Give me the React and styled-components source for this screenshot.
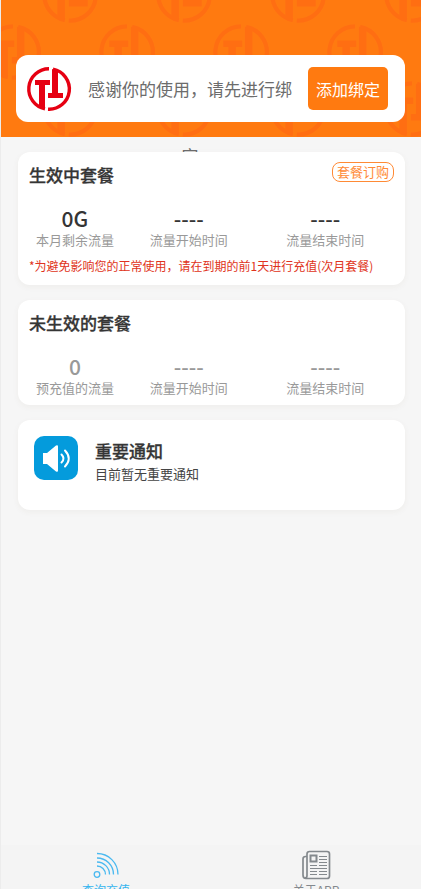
import React from 'react';
import styled, { createGlobalStyle } from 'styled-components';

const GlobalStyle = createGlobalStyle`
  * { box-sizing: border-box; }
  body {
    margin: 0;
    background: #f6f6f6;
    font-family: "Noto Sans CJK SC", sans-serif;
    color: #353535;
  }
  h2, p, dl, dt, dd { margin: 0; }
  button { font-family: inherit; cursor: pointer; }
`;

const Page = styled.div`
  display: flex;
  flex-direction: column;
  height: 100vh;
  overflow: hidden;
  border-left: 1px solid #ececec;
`;

const Header = styled.header`
  position: relative;
  padding: 55px 16px 15px 15px;
  background: #ff7a10;
`;

const Backdrop = styled.svg`
  position: absolute;
  inset: 0;
  width: 100%;
  height: 100%;
`;

const BindCard = styled.section`
  position: relative;
  display: flex;
  align-items: center;
  height: 67px;
  padding: 0 17px 0 10px;
  border-radius: 12px;
  background: #fff;
`;

const Logo = styled.svg`
  flex: none;
  width: 46px;
  height: 46px;
`;

const Greeting = styled.p`
  flex: 1;
  height: 67px;
  padding: 0 10px;
  font-size: 17px;
  line-height: 67px;
  text-align: center;
  color: #6c6c6c;
`;

const BindButton = styled.button`
  flex: none;
  height: 43px;
  padding: 0 8px;
  border: 0;
  border-radius: 5px;
  background: #ff7a10;
  color: #fff;
  font-size: 16px;
`;

const Content = styled.main`
  position: relative;
  flex: 1;
  display: flex;
  flex-direction: column;
  gap: 15px;
  padding: 15px 16px 15px 17px;
`;

const Card = styled.section`
  border-radius: 12px;
  background: #fff;
  box-shadow: 0 2px 6px rgba(90, 80, 40, 0.05);
`;

const CardHead = styled.div`
  display: flex;
  justify-content: space-between;
  align-items: flex-start;
  padding: 10px 11px 0;
`;

const Title = styled.h2`
  font-size: 17px;
  line-height: 26px;
  font-weight: 500;
  -webkit-text-stroke: 0.3px;
`;

const OrderButton = styled.button`
  height: 20px;
  padding: 0 4px;
  border: 1px solid #ff8a35;
  border-radius: 8px;
  background: #fff;
  color: #ff8a35;
  font-size: 13px;
  line-height: 18px;
`;

const Stats = styled.dl`
  display: grid;
  grid-template-columns: 5fr 5fr 7fr;
  padding: 17px 0 8px;
`;

const Stat = styled.div`
  display: flex;
  flex-direction: column-reverse;
  text-align: center;
`;

const StatLabel = styled.dt`
  font-size: 13px;
  line-height: 18px;
  color: #999;
`;

const StatValue = styled.dd`
  font-size: 21px;
  line-height: 26px;
  font-weight: 500;
  color: ${(p) => (p.$muted ? '#999' : '#353535')};
`;

const Warning = styled.p`
  padding: 0 11px 10px;
  font-size: 12px;
  line-height: 18px;
  white-space: nowrap;
  color: #e03320;
`;

const Notice = styled(Card)`
  display: flex;
  gap: 17px;
  padding: 16px 16px 26px;
`;

const NoticeIcon = styled.svg`
  flex: none;
  width: 44px;
  height: 44px;
`;

const NoticeBody = styled.div`
  padding-top: 2px;
`;

const NoticeText = styled.p`
  font-size: 13px;
  line-height: 20px;
  color: #444;
`;

const TabBar = styled.nav`
  display: grid;
  grid-template-columns: 1fr 1fr;
  height: 44px;
  overflow: hidden;
  background: #f4f4f4;
`;

const Tab = styled.a`
  display: flex;
  flex-direction: column;
  align-items: center;
  padding-top: 5px;
  font-size: 12px;
  line-height: 20px;
  text-decoration: none;
  color: ${(p) => (p.$active ? '#35b4ef' : '#84898e')};
`;

const TabIcon = styled.svg`
  flex: none;
  width: 30px;
  height: 30px;
`;

function Emblem({ color }) {
  return (
    <g fill={color}>
      <path
        d="M0-20.200A20.200 20.200 0 0 0-4 19.800M4-19.800A20.200 20.200 0 0 1-1 20.200"
        fill="none"
        stroke={color}
        strokeWidth="3.400"
      />
      <path d="M-14-9H1V-4H-4V20L-10 18V-4H-14Z" />
      <path d="M3-20L9-18V4H14V9H-1V4H3Z" />
    </g>
  );
}

function EmblemBackdrop() {
  return (
    <Backdrop aria-hidden="true">
      <defs>
        <pattern id="emblems" x="12" y="-5" width="114" height="114" patternUnits="userSpaceOnUse">
          {[[57, 0], [57, 114], [0, 57], [114, 57]].map(([x, y]) => (
            <g key={`${x}-${y}`} transform={`translate(${x} ${y}) scale(1.27)`}>
              <Emblem color="#ff6e12" />
            </g>
          ))}
        </pattern>
      </defs>
      <rect width="100%" height="100%" fill="url(#emblems)" />
    </Backdrop>
  );
}

function StatRow({ items, muted }) {
  return (
    <Stats>
      {items.map(([label, value]) => (
        <Stat key={label}>
          <StatLabel>{label}</StatLabel>
          <StatValue $muted={muted}>{value}</StatValue>
        </Stat>
      ))}
    </Stats>
  );
}

export default function App() {
  return (
    <Page>
      <GlobalStyle />
      <Header>
        <EmblemBackdrop />
        <BindCard>
          <Logo viewBox="-23 -23 46 46" aria-hidden="true">
            <Emblem color="#e60012" />
          </Logo>
          <Greeting>感谢你的使用，请先进行绑定</Greeting>
          <BindButton type="button">添加绑定</BindButton>
        </BindCard>
      </Header>
      <Content>
        <Card>
          <CardHead>
            <Title>生效中套餐</Title>
            <OrderButton type="button">套餐订购</OrderButton>
          </CardHead>
          <StatRow items={[['本月剩余流量', '0G'], ['流量开始时间', '----'], ['流量结束时间', '----']]} />
          <Warning>*为避免影响您的正常使用，请在到期的前1天进行充值(次月套餐)</Warning>
        </Card>
        <Card>
          <CardHead>
            <Title>未生效的套餐</Title>
          </CardHead>
          <StatRow muted items={[['预充值的流量', '0'], ['流量开始时间', '----'], ['流量结束时间', '----']]} />
        </Card>
        <Notice>
          <NoticeIcon viewBox="0 0 44 44" aria-hidden="true">
            <rect width="44" height="44" rx="10" fill="#049bdc" />
            <path d="M9 17h4L22 9.500q2-1 2 1v24q0 2-2 1L13 28H9Z" fill="#fff" />
            <path d="M27.500 18.500q4 4 0 8M31 14.500q7.500 8 0 16" fill="none" stroke="#fff" strokeWidth="2" strokeLinecap="round" />
          </NoticeIcon>
          <NoticeBody>
            <Title>重要通知</Title>
            <NoticeText>目前暂无重要通知</NoticeText>
          </NoticeBody>
        </Notice>
      </Content>
      <TabBar>
        <Tab href="#recharge" $active>
          <TabIcon viewBox="0 0 30 30" fill="none" stroke="#4ab9f0" strokeWidth="1.300" aria-hidden="true">
            <circle cx="6" cy="24.500" r="2.800" />
            <path d="M6 3.500A21 21 0 0 1 27 24.500M6 8A16.500 16.500 0 0 1 22.500 24.500M6 12A12.500 12.500 0 0 1 18.500 24.500M6 16A8.500 8.500 0 0 1 14.500 24.500" />
          </TabIcon>
          查询充值
        </Tab>
        <Tab href="#about">
          <TabIcon viewBox="0 0 30 30" fill="none" stroke="#84898d" aria-hidden="true">
            <path d="M6 6.500H4.500Q2 6.500 2 9V25Q2 28.500 5 28.500H26Q28.500 28.500 28.500 26V4Q28.500 1.500 26 1.500H8.500Q6 1.500 6 4V25.500Q6 28 4 28" strokeWidth="1.700" />
            <rect x="9.500" y="5.500" width="6" height="6" strokeWidth="2" />
            <path d="M18 6.500h8M18 9.500h8M18 12.500h8M9 15.500h7M18 15.500h8M9 18.500h17M9 21.500h7M18 21.500h8M9 24.500h7M18 24.500h8" />
          </TabIcon>
          关于APP
        </Tab>
      </TabBar>
    </Page>
  );
}
